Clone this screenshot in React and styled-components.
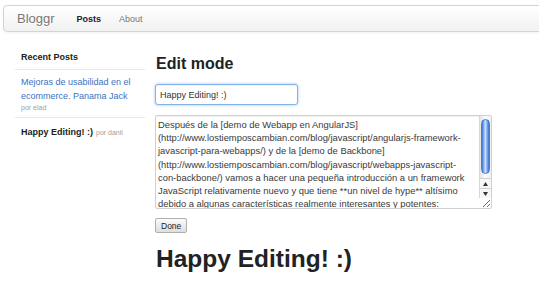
import React from "react";
import styled, { createGlobalStyle } from "styled-components";

const Global = createGlobalStyle`
  html, body { margin: 0; padding: 0; background: #fff; overflow: hidden; }
  body { font-family: "Liberation Sans", Helvetica, Arial, sans-serif; color: #333; }
`;

const Navbar = styled.div`
  margin: 5px -20px 0 3px;
  height: 25px;
  border: 1px solid #d4d4d4;
  border-radius: 4px 0 0 4px;
  background: linear-gradient(to bottom, #ffffff, #f1f1f1);
  box-shadow: 0 1px 3px rgba(0, 0, 0, 0.06);
  display: flex;
  align-items: center;
`;

const Brand = styled.span`
  padding: 0 22px 0 13px;
  font-size: 13px;
  color: #777;
  text-shadow: 0 1px 0 #fff;
`;

const NavLinks = styled.nav`
  display: flex;
  gap: 18px;
`;

const NavLink = styled.span`
  font-size: 9px;
  color: ${(p) => (p.$active ? "#222" : "#777")};
  font-weight: ${(p) => (p.$active ? 700 : 400)};
`;

const Layout = styled.div`
  display: grid;
  grid-template-columns: 130px 1fr;
  gap: 10px;
  padding: 12px 0 0 15px;
`;

const Sidebar = styled.aside`
  display: flex;
  flex-direction: column;
`;

const SideHeader = styled.div`
  padding: 6px 6px 5px;
  line-height: 14px;
  font-size: 9px;
  font-weight: 700;
  color: #222;
  border-bottom: 1px solid #e8e8e8;
`;

const SideItem = styled.div`
  padding: ${(p) => (p.$inline ? "6px 6px" : "4px 6px 3px")};
  border-bottom: ${(p) => (p.$last ? "none" : "1px solid #e8e8e8")};
  line-height: 11px;
`;

const PostLink = styled.span`
  font-size: 9px;
  color: ${(p) => (p.$current ? "#222" : "#3b73c0")};
  font-weight: ${(p) => (p.$current ? 700 : 400)};
`;

const Meta = styled.span`
  display: ${(p) => (p.$block ? "block" : "inline")};
  font-size: 7px;
  color: #a0a0a0;
  margin-left: ${(p) => (p.$block ? "0" : "3px")};
  line-height: 12px;
`;

const Main = styled.main`
  display: flex;
  flex-direction: column;
  align-items: flex-start;
  padding-top: 10px;
`;

const Title = styled.h3`
  margin: 0 0 0 1px;
  font-size: 16px;
  line-height: 20px;
  font-weight: 700;
  color: #222;
`;

const TitleInput = styled.input`
  margin-top: 10px;
  box-sizing: border-box;
  width: 143px;
  height: 21px;
  padding: 0 4px;
  font-family: inherit;
  font-size: 9px;
  color: #333;
  border: 1px solid #86b3e6;
  border-radius: 3px;
  box-shadow: 0 0 3px rgba(82, 150, 236, 0.6), inset 0 1px 1px rgba(0, 0, 0, 0.06);
  outline: none;
`;

const Field = styled.div`
  position: relative;
  margin-top: 10px;
  width: 337px;
  height: 94px;
`;

const Body = styled.textarea`
  display: block;
  box-sizing: border-box;
  width: 100%;
  height: 100%;
  padding: 2px 19px 0 2px;
  font-family: inherit;
  font-size: 9.4px;
  line-height: 13.2px;
  color: #3a3a3a;
  border: 1px solid #d0d0d0;
  border-radius: 2px;
  box-shadow: inset 0 1px 1px rgba(0, 0, 0, 0.06);
  outline: none;
  overflow: hidden;
  resize: both;
`;

const ScrollBar = styled.div`
  position: absolute;
  top: 1px;
  right: 1px;
  bottom: 11px;
  width: 11px;
  display: flex;
  flex-direction: column;
  border-left: 1px solid #d6d6d6;
  background: linear-gradient(to right, #e6e6e6, #fbfbfb 50%, #f1f1f1);
`;

const Track = styled.div`
  flex: 1;
  padding: 3px 1px 0;
`;

const Thumb = styled.div`
  height: 55px;
  border-radius: 5px;
  border: 1px solid #4f7dc6;
  box-sizing: border-box;
  background: linear-gradient(to right, #3f75d2, #8fb8f0 30%, #cfe2fb 48%, #84b0ee 70%, #3b70cf);
`;

const Arrow = styled.div`
  height: 9px;
  display: flex;
  align-items: center;
  justify-content: center;
  border-top: 1px solid #d0d0d0;
  background: #f7f7f7;
  svg { display: block; }
`;

const DoneButton = styled.button`
  margin-top: 9px;
  height: 15px;
  padding: 0 5px;
  font-family: inherit;
  font-size: 8.5px;
  color: #222;
  border: 1px solid #b0b0b0;
  border-radius: 2px;
  background: linear-gradient(to bottom, #fbfbfb, #dedede);
`;

const Preview = styled.h1`
  margin: 12px 0 0 1px;
  font-size: 24.5px;
  line-height: 28px;
  font-weight: 700;
  color: #222;
`;

const content = `Después de la [demo de Webapp en AngularJS](http://www.lostiemposcambian.com/blog/javascript/angularjs-framework-javascript-para-webapps/) y de la [demo de Backbone](http://www.lostiemposcambian.com/blog/javascript/webapps-javascript-con-backbone/) vamos a hacer una pequeña introducción a un framework JavaScript relativamente nuevo y que tiene **un nivel de hype** altísimo debido a algunas características realmente interesantes y potentes:
`;

export default function App() {
  return (
    <>
      <Global />
      <Navbar>
        <Brand>Bloggr</Brand>
        <NavLinks>
          <NavLink $active>Posts</NavLink>
          <NavLink>About</NavLink>
        </NavLinks>
      </Navbar>
      <Layout>
        <Sidebar>
          <SideHeader>Recent Posts</SideHeader>
          <SideItem>
            <PostLink>Mejoras de usabilidad en el ecommerce. Panama Jack</PostLink>
            <Meta $block>por elad</Meta>
          </SideItem>
          <SideItem $inline $last>
            <PostLink $current>Happy Editing! :)</PostLink>
            <Meta>por danii</Meta>
          </SideItem>
        </Sidebar>
        <Main>
          <Title>Edit mode</Title>
          <TitleInput defaultValue="Happy Editing! :)" />
          <Field>
            <Body defaultValue={content} />
            <ScrollBar>
              <Track>
                <Thumb />
              </Track>
              <Arrow>
                <svg width="5" height="4" viewBox="0 0 5 4"><path d="M2.5 0L5 4H0z" fill="#333" /></svg>
              </Arrow>
              <Arrow>
                <svg width="5" height="4" viewBox="0 0 5 4"><path d="M0 0h5L2.5 4z" fill="#333" /></svg>
              </Arrow>
            </ScrollBar>
          </Field>
          <DoneButton>Done</DoneButton>
          <Preview>Happy Editing! :)</Preview>
        </Main>
      </Layout>
    </>
  );
}
